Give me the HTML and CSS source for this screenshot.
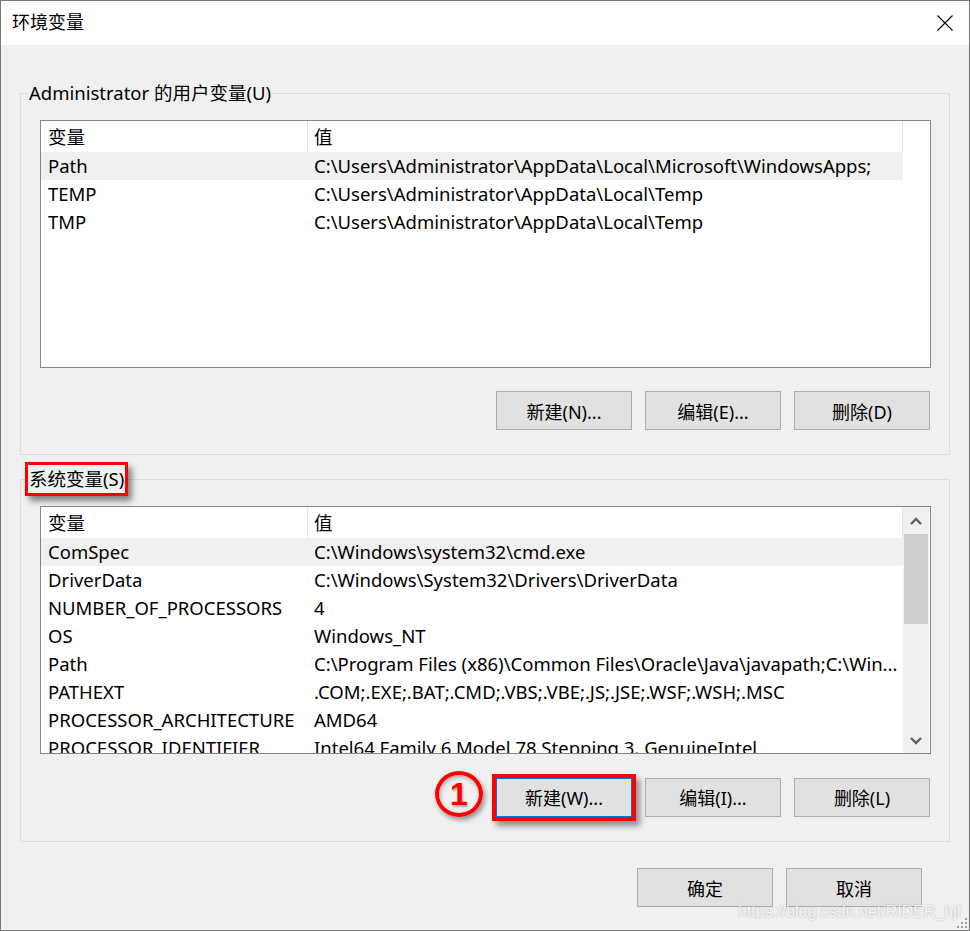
FILE: index.html
```html
<!DOCTYPE html>
<html lang="zh-CN">
<head>
    <meta charset="UTF-8">
    <title>环境变量</title>
    <link rel="stylesheet" href="styles.css">
</head>
<body>
    <div class="window">
        <div class="titlebar">
            <span class="title">环境变量</span>
            <svg class="close" width="16" height="16" viewBox="0 0 16 16">
                <path d="M0.5 0.5 L15.5 15.5 M15.5 0.5 L0.5 15.5" stroke="#000" stroke-width="1.1" fill="none"/>
            </svg>
        </div>

        <div class="content">
            <fieldset class="group">
                <legend>Administrator 的用户变量(U)</legend>
                <div class="group-body">
                    <div class="listbox">
                        <div class="cols">
                            <div class="head">
                                <div class="name">变量</div>
                                <div class="value">值</div>
                            </div>
                            <div class="row selected">
                                <div class="name">Path</div>
                                <div class="value">C:\Users\Administrator\AppData\Local\Microsoft\WindowsApps;</div>
                            </div>
                            <div class="row">
                                <div class="name">TEMP</div>
                                <div class="value">C:\Users\Administrator\AppData\Local\Temp</div>
                            </div>
                            <div class="row">
                                <div class="name">TMP</div>
                                <div class="value">C:\Users\Administrator\AppData\Local\Temp</div>
                            </div>
                        </div>
                    </div>
                    <div class="btn-row">
                        <button class="btn">新建(N)...</button>
                        <button class="btn">编辑(E)...</button>
                        <button class="btn">删除(D)</button>
                    </div>
                </div>
            </fieldset>

            <fieldset class="group group-system">
                <legend class="marked">系统变量(S)</legend>
                <div class="group-body">
                    <div class="listbox">
                        <div class="cols">
                            <div class="head">
                                <div class="name">变量</div>
                                <div class="value">值</div>
                            </div>
                            <div class="row selected">
                                <div class="name">ComSpec</div>
                                <div class="value">C:\Windows\system32\cmd.exe</div>
                            </div>
                            <div class="row">
                                <div class="name">DriverData</div>
                                <div class="value">C:\Windows\System32\Drivers\DriverData</div>
                            </div>
                            <div class="row">
                                <div class="name">NUMBER_OF_PROCESSORS</div>
                                <div class="value">4</div>
                            </div>
                            <div class="row">
                                <div class="name">OS</div>
                                <div class="value">Windows_NT</div>
                            </div>
                            <div class="row">
                                <div class="name">Path</div>
                                <div class="value">C:\Program Files (x86)\Common Files\Oracle\Java\javapath;C:\Win...</div>
                            </div>
                            <div class="row">
                                <div class="name">PATHEXT</div>
                                <div class="value">.COM;.EXE;.BAT;.CMD;.VBS;.VBE;.JS;.JSE;.WSF;.WSH;.MSC</div>
                            </div>
                            <div class="row">
                                <div class="name">PROCESSOR_ARCHITECTURE</div>
                                <div class="value">AMD64</div>
                            </div>
                            <div class="row">
                                <div class="name">PROCESSOR_IDENTIFIER</div>
                                <div class="value">Intel64 Family 6 Model 78 Stepping 3, GenuineIntel</div>
                            </div>
                        </div>
                        <div class="scrollbar">
                            <div class="sb-btn">
                                <svg width="12" height="8" viewBox="0 0 12 8"><path d="M1 7 L6 2 L11 7" stroke="#606060" stroke-width="2.4" fill="none"/></svg>
                            </div>
                            <div class="sb-thumb"></div>
                            <div class="sb-space"></div>
                            <div class="sb-btn sb-down">
                                <svg width="12" height="8" viewBox="0 0 12 8"><path d="M1 1 L6 6 L11 1" stroke="#606060" stroke-width="2.4" fill="none"/></svg>
                            </div>
                        </div>
                    </div>
                    <div class="btn-row">
                        <span class="step">1</span>
                        <button class="btn focused">新建(W)...</button>
                        <button class="btn">编辑(I)...</button>
                        <button class="btn">删除(L)</button>
                    </div>
                </div>
            </fieldset>

            <div class="footer">
                <button class="btn">确定</button>
                <button class="btn">取消</button>
            </div>
        </div>

        <div class="watermark">https://blog.csdn.net/RIDER_hjf</div>
        <svg class="grip" width="11" height="11" viewBox="0 0 11 11">
            <rect x="8" y="0" width="2" height="2" fill="#a0a0a0"/>
            <rect x="4" y="4" width="2" height="2" fill="#a0a0a0"/>
            <rect x="8" y="4" width="2" height="2" fill="#a0a0a0"/>
            <rect x="0" y="8" width="2" height="2" fill="#a0a0a0"/>
            <rect x="4" y="8" width="2" height="2" fill="#a0a0a0"/>
            <rect x="8" y="8" width="2" height="2" fill="#a0a0a0"/>
        </svg>
    </div>
</body>
</html>
```

FILE: styles.css
```css
* {
    box-sizing: border-box;
}
body {
    margin: 0;
    background: #f0f0f0;
    font-family: "Noto Sans", "Noto Sans CJK SC", sans-serif;
    font-size: 18.5px;
    color: #000;
}
.window {
    position: relative;
    width: 970px;
    height: 931px;
    border: 1px solid #777;
    background: #f0f0f0;
    overflow: hidden;
}
.titlebar {
    height: 44px;
    background: #fff;
    display: flex;
    align-items: center;
    padding-left: 11px;
    padding-bottom: 2px;
}
.title {
    font-size: 18px;
    line-height: 24px;
}
.close {
    margin-left: auto;
    margin-right: 16px;
    margin-top: 2px;
}
.content {
    padding-top: 34px;
}
.group {
    margin: 0 19px;
    padding: 0;
    border: 1px solid #dcdcdc;
    min-width: 0;
}
.group-system {
    margin-top: 10px;
}
.group legend {
    margin-left: 7px;
    padding: 0 1px;
    height: 28px;
    line-height: 28px;
}
.group legend.marked {
    box-shadow: 0 0 0 3px #f00, 4px 5px 6px 3px rgba(0,0,0,0.45);
}
.group-body {
    padding: 13px 18px 24px 19px;
}
.listbox {
    height: 248px;
    border: 1px solid #828790;
    background: #fff;
    display: flex;
    overflow: hidden;
}
.cols {
    width: 862px;
    flex: none;
}
.head {
    display: flex;
    height: 31px;
    line-height: 31px;
    border-right: 1px solid #e5e5e5;
}
.row {
    display: flex;
    height: 28px;
    line-height: 28px;
}
.row.selected {
    background: #f0f0f0;
}
.name {
    width: 266px;
    flex: none;
    padding-left: 7px;
    white-space: nowrap;
    overflow: hidden;
}
.value {
    flex: 1;
    padding-left: 7px;
    white-space: nowrap;
    overflow: hidden;
}
.head .value {
    border-left: 1px solid #e5e5e5;
    padding-left: 6px;
}
.scrollbar {
    width: 26px;
    flex: none;
    background: #f0f0f0;
    display: flex;
    flex-direction: column;
}
.sb-btn {
    height: 27px;
    display: flex;
    align-items: center;
    justify-content: center;
}
.sb-down {
    height: 25px;
}
.sb-thumb {
    height: 90px;
    margin: 0 1px;
    background: #cdcdcd;
}
.sb-space {
    flex: 1;
}
.btn-row {
    display: flex;
    justify-content: flex-end;
    align-items: center;
    gap: 13px;
    margin-top: 23px;
    padding-right: 1px;
}
.btn {
    width: 136px;
    height: 39px;
    padding: 0;
    background: #e1e1e1;
    border: 1px solid #adadad;
    font-family: inherit;
    font-size: 18px;
    color: #000;
}
.btn.focused {
    border-color: #0078d7;
    box-shadow: 0 0 0 4px #f00, 4px 5px 6px 4px rgba(0,0,0,0.4);
}
.step {
    width: 48px;
    height: 46px;
    border: 4px solid #f00;
    border-radius: 50%;
    color: #f00;
    font-family: "Liberation Sans", sans-serif;
    font-weight: bold;
    font-size: 32px;
    line-height: 38px;
    text-align: center;
    margin-top: -6px;
    box-shadow: 2px 3px 5px rgba(0,0,0,0.4), inset 1px 2px 4px rgba(0,0,0,0.3);
    text-shadow: 1px 2px 2px rgba(0,0,0,0.3);
}
.footer {
    display: flex;
    justify-content: flex-end;
    gap: 13px;
    margin-top: 26px;
    padding-right: 47px;
}
.watermark {
    position: absolute;
    left: 737px;
    top: 901px;
    font-family: "Liberation Sans", sans-serif;
    font-size: 16px;
    line-height: 20px;
    color: rgba(255,255,255,0.85);
    text-shadow: 0 0 2px rgba(0,0,0,0.3);
}
.grip {
    position: absolute;
    right: 1px;
    bottom: 1px;
}
```
